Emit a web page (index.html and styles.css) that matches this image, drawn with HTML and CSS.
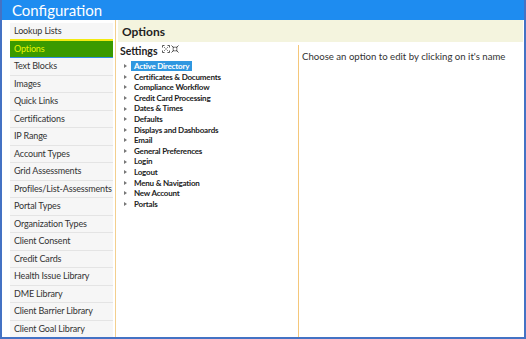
FILE: index.html
```html
<!DOCTYPE html>
<html lang="en">

<head>
  <meta charset="UTF-8" />
  <title>Configuration</title>
  <link rel="stylesheet" href="styles.css">
</head>

<body>
  <div class="frame">
    <h1 class="top-bar">Configuration</h1>

    <div class="layout">
      <!-- Left nav -->
      <ul class="side-nav">
        <li>Lookup Lists</li>
        <li class="active">Options</li>
        <li>Text Blocks</li>
        <li>Images</li>
        <li>Quick Links</li>
        <li>Certifications</li>
        <li>IP Range</li>
        <li>Account Types</li>
        <li>Grid Assessments</li>
        <li>Profiles/List-Assessments</li>
        <li>Portal Types</li>
        <li>Organization Types</li>
        <li>Client Consent</li>
        <li>Credit Cards</li>
        <li>Health Issue Library</li>
        <li>DME Library</li>
        <li>Client Barrier Library</li>
        <li>Client Goal Library</li>
        <li></li>
      </ul>

      <div class="main">
        <h2 class="main-title">Options</h2>

        <div class="panes">
          <div class="settings">
            <div class="settings-head">
              Settings
              <span class="tree-tools">
                <svg width="8" height="8" viewBox="0 0 8 8" fill="none" stroke="#555" stroke-width="1">
                  <path d="M0.5 2.5v-2h2M5.5 0.5h2v2M7.5 5.5v2h-2M2.5 7.5h-2v-2" />
                  <path d="M2 2l1.5 1.5M6 2L4.5 3.5M6 6L4.5 4.5M2 6l1.5-1.5" stroke-dasharray="1 0.6" />
                </svg>
                <svg width="8" height="8" viewBox="0 0 8 8" fill="none" stroke="#555" stroke-width="1">
                  <path d="M0.5 0.5l2.5 2.5M7.5 0.5L5 3M7.5 7.5L5 5M0.5 7.5L3 5" />
                  <path d="M3 1.5v1.5h-1.5M5 1.5v1.5h1.5M5 6.5v-1.5h1.5M3 6.5v-1.5h-1.5" />
                </svg>
              </span>
            </div>
            <ul class="tree">
              <li><span class="selected">Active Directory</span></li>
              <li><span>Certificates &amp; Documents</span></li>
              <li><span>Compliance Workflow</span></li>
              <li><span>Credit Card Processing</span></li>
              <li><span>Dates &amp; Times</span></li>
              <li><span>Defaults</span></li>
              <li><span>Displays and Dashboards</span></li>
              <li><span>Email</span></li>
              <li><span>General Preferences</span></li>
              <li><span>Login</span></li>
              <li><span>Logout</span></li>
              <li><span>Menu &amp; Navigation</span></li>
              <li><span>New Account</span></li>
              <li><span>Portals</span></li>
            </ul>
          </div>

          <div class="editor">
            <p>Choose an option to edit by clicking on it's name</p>
          </div>
        </div>
      </div>
    </div>
  </div>
</body>

</html>
```

FILE: styles.css
```css
* {
  box-sizing: border-box;
}

body {
  margin: 0;
  font-family: Lato, 'Open Sans', sans-serif;
  color: #222;
  background: #fff;
}

.frame {
  width: 526px;
  height: 339px;
  border: 2px solid #4472c4;
  border-top: none;
  overflow: hidden;
  display: flex;
  flex-direction: column;
}

.top-bar {
  margin: 0 -2px;
  height: 20px;
  padding-left: 10px;
  background: #1e8cf0;
  color: #fff;
  font-size: 15px;
  font-weight: normal;
  line-height: 21px;
  border-left: 2px solid #3a74cc;
}

.layout {
  flex: 1;
  display: flex;
  min-height: 0;
}

.side-nav {
  list-style: none;
  margin: 0 0 0 8px;
  padding: 3px 2px 0 0;
  width: 106px;
  border-right: 1px solid #f3cf8e;
}

.side-nav li {
  height: 17.5px;
  line-height: 16px;
  padding-left: 4px;
  font-size: 9px;
  letter-spacing: -0.15px;
  color: #333;
  background: #f6f6f6;
  border-bottom: 1.5px solid #e4e4e4;
  white-space: nowrap;
}

.side-nav li.active {
  background: #3a9a00;
  color: #e8f500;
  border-top: 2px solid #f2ea10;
  border-bottom: 1.5px solid #2f8fe0;
  line-height: 15px;
  margin-top: -2px;
  height: 19.5px;
}

.main {
  flex: 1;
  display: flex;
  flex-direction: column;
  margin-left: 2px;
  margin-right: 1px;
}

.main-title {
  margin: 0;
  height: 22px;
  padding-left: 4px;
  background: #f4f4de;
  font-size: 12px;
  line-height: 24px;
}

.panes {
  flex: 1;
  display: flex;
}

.settings {
  width: 180px;
  padding: 2px 0 0 2px;
}

.settings-head {
  font-size: 10.5px;
  font-weight: bold;
  display: flex;
  align-items: center;
  gap: 4px;
  height: 14px;
}

.tree-tools {
  display: flex;
  gap: 1px;
  margin-top: -4px;
}

.tree {
  list-style: none;
  margin: 3px 0 0;
  padding: 0 0 0 4px;
}

.tree li {
  height: 10.6px;
  font-size: 8px;
  letter-spacing: -0.2px;
  font-weight: bold;
  line-height: 10.6px;
  display: flex;
  align-items: center;
  color: #222;
}

.tree li::before {
  content: "";
  border-left: 3px solid #777;
  border-top: 2px solid transparent;
  border-bottom: 2px solid transparent;
  margin-right: 5px;
}

.tree span {
  padding: 0 3px;
  margin-left: -1px;
}

.tree .selected {
  background: #2f97e0;
  color: #fff;
  line-height: 10px;
}

.editor {
  flex: 1;
  margin-top: 3px;
  border-left: 1px solid #f5c77a;
  padding-left: 3px;
}

.editor p {
  margin: 6px 0 0;
  font-size: 9.6px;
  color: #333;
}
```
